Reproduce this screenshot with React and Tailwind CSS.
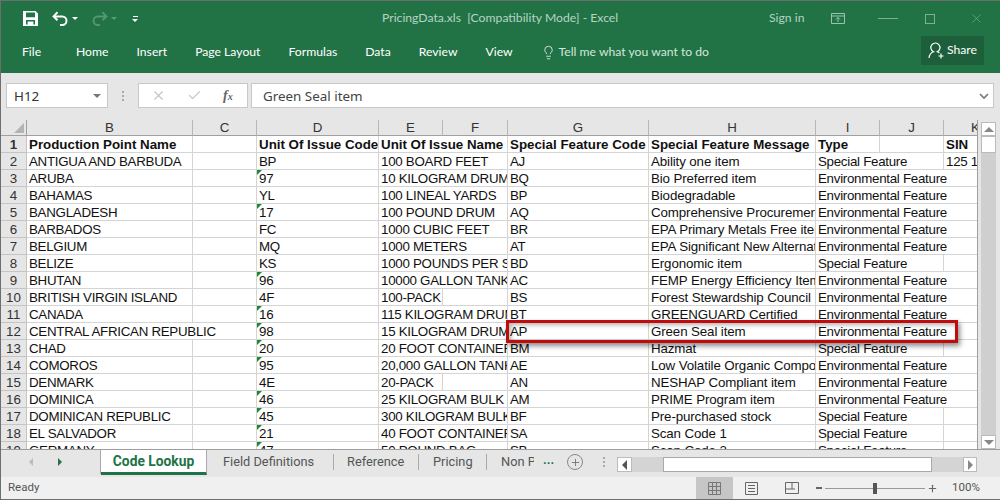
import { Check, Lightbulb, Plus, X } from 'lucide-react'

const columns = ['B', 'C', 'D', 'E', 'F', 'G', 'H', 'I', 'J', 'K']

const rows = [
  ['ANTIGUA AND BARBUDA', 'BP', '100 BOARD FEET', 'AJ', 'Ability one item', 'S', '125 100'],
  ['ARUBA', '97', '10 KILOGRAM DRUM', 'BQ', 'Bio Preferred item', 'E'],
  ['BAHAMAS', 'YL', '100 LINEAL YARDS', 'BP', 'Biodegradable', 'E'],
  ['BANGLADESH', '17', '100 POUND DRUM', 'AQ', 'Comprehensive Procurement Guideline', 'E'],
  ['BARBADOS', 'FC', '1000 CUBIC FEET', 'BR', 'EPA Primary Metals Free item', 'E'],
  ['BELGIUM', 'MQ', '1000 METERS', 'AT', 'EPA Significant New Alternatives', 'E'],
  ['BELIZE', 'KS', '1000 POUNDS PER SQ', 'BD', 'Ergonomic item', 'S'],
  ['BHUTAN', '96', '10000 GALLON TANK', 'AC', 'FEMP Energy Efficiency Item', 'E'],
  ['BRITISH VIRGIN ISLAND', '4F', '100-PACK', 'BS', 'Forest Stewardship Council', 'E'],
  ['CANADA', '16', '115 KILOGRAM DRUM', 'BT', 'GREENGUARD Certified', 'E'],
  ['CENTRAL AFRICAN REPUBLIC', '98', '15 KILOGRAM DRUM', 'AP', 'Green Seal item', 'E'],
  ['CHAD', '20', '20 FOOT CONTAINER', 'BM', 'Hazmat', 'S'],
  ['COMOROS', '95', '20,000 GALLON TANK', 'AE', 'Low Volatile Organic Compounds', 'E'],
  ['DENMARK', '4E', '20-PACK', 'AN', 'NESHAP Compliant item', 'E'],
  ['DOMINICA', '46', '25 KILOGRAM BULK', 'AM', 'PRIME Program item', 'E'],
  ['DOMINICAN REPUBLIC', '45', '300 KILOGRAM BULK', 'BF', 'Pre-purchased stock', 'S'],
  ['EL SALVADOR', '21', '40 FOOT CONTAINER', 'SA', 'Scan Code 1', 'S'],
  ['GERMANY', '47', '50 POUND BAG', 'SB', 'Scan Code 2', 'S'],
]

const gridCols = 'grid grid-cols-[26px_166px_64px_122px_64px_65px_141px_167px_64px_64px_64px]'
const cellBase = 'h-[17px] overflow-hidden whitespace-nowrap border-r border-b border-[#d4d4d4] pl-[2px] leading-[17px]'

function Cell({ children, className = '' }) {
  return <div className={`${cellBase} ${className}`}>{children}</div>
}

function RowNumber({ children }) {
  return (
    <div className="h-[17px] border-r border-b border-[#c4c4c4] bg-[#e6e6e6] text-center leading-[17px] tracking-normal text-[#333]">
      {children}
    </div>
  )
}

function DataRow({ row, number }) {
  const [name, code, unit, sfCode, message, type, sin] = row
  const wideName = name.length > 22
  const shortUnit = unit.length < 9
  return (
    <div className={`${gridCols} tracking-[-0.28px]`}>
      <RowNumber>{number}</RowNumber>
      <Cell className={wideName ? 'col-span-2' : ''}>{name}</Cell>
      {!wideName && <Cell />}
      <Cell className="relative">
        {/^\d+$/.test(code) && (
          <span className="absolute top-0 left-0 border-t-[5px] border-r-[5px] border-t-[#1c8a35] border-r-transparent" />
        )}
        {code}
      </Cell>
      <Cell className={shortUnit ? '' : 'col-span-2'}>{unit}</Cell>
      {shortUnit && <Cell />}
      <Cell>{sfCode}</Cell>
      <Cell className="tracking-[-0.12px]">{message}</Cell>
      {type === 'S' ? (
        <>
          <Cell className="col-span-2">Special Feature</Cell>
          <Cell>{sin}</Cell>
        </>
      ) : (
        <Cell className="col-span-3">Environmental Feature</Cell>
      )}
    </div>
  )
}

function SaveIcon() {
  return (
    <svg width="15" height="15" viewBox="0 0 15 15" className="shrink-0">
      <path fillRule="evenodd" fill="#fff" d="M0 0h12.5L15 2.5V15H0zM3 1.6v4.6h9V1.6zM3 9v4.4h1.6V10.6h5.8v2.8H12V9z" />
      <rect x="5.8" y="11" width="2" height="2.4" fill="#fff" />
    </svg>
  )
}

function ArrowBack({ color, flip }) {
  return (
    <svg width="17" height="15" viewBox="0 0 17 15" className={flip ? '-scale-x-100' : ''}>
      <path d="M5.5 1.2 1.6 5.4l3.9 3.9M2 5.4h8.2a4.3 4.3 0 0 1 0 8.6H8" fill="none" stroke={color} strokeWidth="2" />
    </svg>
  )
}

function Caret({ color, className = '' }) {
  return <span className={`h-0 w-0 border-x-[3px] border-t-[3px] border-x-transparent ${color} ${className}`} />
}

function TitleBar() {
  return (
    <div className="flex h-[35px] items-center font-['Lato',sans-serif] text-[12.2px]">
      <div className="flex w-[381px] items-center pl-[22px]">
        <SaveIcon />
        <div className="ml-[14px]"><ArrowBack color="#fff" /></div>
        <Caret color="border-t-white" className="ml-[3px]" />
        <div className="ml-[13px] opacity-90"><ArrowBack color="#5a9a78" flip /></div>
        <Caret color="border-t-[#5a9a78]" className="ml-[3px]" />
        <div className="ml-[15px] flex flex-col items-center gap-[2px]">
          <span className="h-px w-[5px] bg-white" />
          <Caret color="border-t-white" />
        </div>
      </div>
      <div className="w-[387px] whitespace-pre text-[#b5d3c2]">PricingData.xls  [Compatibility Mode] - Excel</div>
      <div className="w-[62px] text-[#b5d3c2]">Sign in</div>
      <svg width="14" height="12" viewBox="0 0 14 12" className="shrink-0">
        <path d="M.5.5h13v10H.5zM.5 3h13M7 9V4.5M5 6.5l2-2 2 2" fill="none" stroke="#9cc3ad" />
      </svg>
      <span className="ml-[33px] h-px w-[20px] bg-[#7fb096]" />
      <span className="ml-[27px] size-[10px] border border-[#7fb096]" />
      <X size={15} strokeWidth={1} className="ml-[34px] text-[#7fb096]" />
    </div>
  )
}

function TabRow() {
  const tabs = ['Home', 'Insert', 'Page Layout', 'Formulas', 'Data', 'Review', 'View']
  return (
    <div className="flex h-[37px] items-start pl-[21px] font-['Lato',sans-serif] text-[12.2px] text-white">
      <span className="mt-[7px] w-[54px]">File</span>
      <div className="mt-[7px] flex gap-[28px]">
        {tabs.map(t => <span key={t}>{t}</span>)}
        <span className="flex items-center gap-[3px] text-[#d3e6db]">
          <Lightbulb size={15} strokeWidth={1.2} className="text-white" />
          Tell me what you want to do
        </span>
      </div>
      <div className="ml-auto mr-[16px] flex h-[29px] w-[63px] items-center gap-[2px] bg-[#1d5f3a] pl-[7px]">
        <svg width="17" height="17" viewBox="0 0 17 17" className="shrink-0">
          <path d="M1 16c.4-3.6 2.400-5.500 4.500-6.200a4.600 4.600 0 1 1 3.800 0c.8.300 1.500.7 2.100 1.300M13 11.500V16.500M10.500 14H15.500" fill="none" stroke="#fff" strokeWidth="1.2" />
        </svg>
        Share
      </div>
    </div>
  )
}

function FormulaBar() {
  return (
    <div className="flex h-[47px] items-start bg-[#e6e6e6] pt-[10px] pl-[5px] font-['Noto_Sans',sans-serif] text-[13.4px]">
      <div className="flex h-[25px] w-[102px] items-center justify-between border border-[#c8c8c8] bg-white pt-px pr-[6px] pl-[7px] text-[#333]">
        H12
        <Caret color="border-t-[#777]" className="border-x-4! border-t-4!" />
      </div>
      <div className="mx-[14px] flex h-[25px] flex-col justify-center gap-[2px]">
        <span className="size-[2px] bg-[#aaa]" />
        <span className="size-[2px] bg-[#aaa]" />
        <span className="size-[2px] bg-[#aaa]" />
      </div>
      <div className="flex h-[25px] w-[110px] items-center border border-[#c8c8c8] bg-white pl-[12px]">
        <X size={15} strokeWidth={1.8} className="text-[#c4c4c4]" />
        <Check size={15} strokeWidth={1.8} className="ml-[21px] text-[#c4c4c4]" />
        <span className="ml-[21px] font-['Liberation_Serif',serif] text-[14px] font-bold text-[#666] italic">f<span className="text-[10px]">x</span></span>
      </div>
      <div className="ml-[3px] flex h-[25px] w-[743px] items-center justify-between border border-[#c8c8c8] bg-white pt-px pr-[4px] pl-[11px] text-[#444]">
        Green Seal item
        <svg width="10" height="7" viewBox="0 0 10 7"><path d="M1 1l4 4 4-4" fill="none" stroke="#777" strokeWidth="1.600" /></svg>
      </div>
    </div>
  )
}

function Sheet() {
  return (
    <div className="relative h-[329px] w-[976px] overflow-hidden bg-white font-['Liberation_Sans',Arial,sans-serif] text-[13.33px] text-[#111]">
      <div className={`${gridCols} h-[16px]`}>
        <div className="relative h-[16px] border-r border-b border-[#a0a0a0] bg-[#e6e6e6]">
          <span className="absolute right-[2px] bottom-[2px] border-b-[10px] border-l-[10px] border-b-[#b4b4b4] border-l-transparent" />
        </div>
        {columns.map(c => (
          <div key={c} className="h-[16px] border-r border-b border-r-[#b8b8b8] border-b-[#a0a0a0] bg-[#e6e6e6] text-center leading-[15px] text-[#333]">
            {c}
          </div>
        ))}
      </div>
      <div className={`${gridCols} font-bold`}>
        <RowNumber>1</RowNumber>
        <Cell>Production Point Name</Cell>
        <Cell />
        <Cell>Unit Of Issue Code</Cell>
        <Cell className="col-span-2">Unit Of Issue Name</Cell>
        <Cell>Special Feature Code</Cell>
        <Cell>Special Feature Message</Cell>
        <Cell>Type</Cell>
        <Cell />
        <Cell>SIN</Cell>
      </div>
      {rows.map((row, i) => <DataRow key={row[0]} row={row} number={i + 2} />)}
      <div className="absolute top-[200px] left-[505px] h-[23px] w-[452px] border-[3px] border-[#bf0d0d] shadow-[2px_3px_5px_rgba(0,0,0,0.45),inset_2px_2px_4px_rgba(0,0,0,0.3)]" />
    </div>
  )
}

function ScrollButton({ dir, className = '' }) {
  const tri = {
    up: 'border-x-[5px] border-b-[5px] border-x-transparent border-b-[#888]',
    down: 'border-x-[5px] border-t-[5px] border-x-transparent border-t-[#888]',
    left: 'border-y-[5px] border-r-[5px] border-y-transparent border-r-[#555]',
    right: 'border-y-[5px] border-l-[5px] border-y-transparent border-l-[#888]',
  }[dir]
  return (
    <div className={`flex items-center justify-center border border-[#bbb] bg-white ${className}`}>
      <span className={`h-0 w-0 ${tri}`} />
    </div>
  )
}

function VerticalScroll() {
  return (
    <div className="flex h-[329px] w-[22px] flex-col items-center border-l border-[#a0a0a0] bg-[#e6e6e6] pt-[2px]">
      <ScrollButton dir="up" className="h-[14px] w-[15px]" />
      <div className="flex-1 bg-[#cfcfcf]">
        <div className="h-[17px] w-[15px] border border-[#bbb] bg-white" />
      </div>
      <ScrollButton dir="down" className="h-[14px] w-[15px]" />
    </div>
  )
}

function SheetTabs() {
  return (
    <div className="flex h-[28px] items-start border-t border-[#9c9c9c] bg-[#e6e6e6] text-[12.8px] text-[#555]">
      <div className="flex h-[24px] w-[100px] items-center border-r border-[#aaa] pl-[28px]">
        <span className="h-0 w-0 border-y-[4px] border-r-[4px] border-y-transparent border-r-[#bbb]" />
        <span className="ml-[25px] h-0 w-0 border-y-[4px] border-l-[4px] border-y-transparent border-l-[#217346]" />
      </div>
      <div className="flex h-[25px] w-[106px] items-center justify-center border-r border-b-[3px] border-r-[#aaa] border-b-[#217346] bg-white text-[13.8px] font-bold text-[#217346]">
        Code Lookup
      </div>
      <div className="flex h-[24px] w-[410px] shrink-0 items-center pl-[16px]">
        <span className="w-[92px] whitespace-nowrap">Field Definitions</span>
        <span className="mr-[13px] ml-[18px] h-[16px] w-px bg-[#aaa]" />
        <span className="w-[57px] whitespace-nowrap">Reference</span>
        <span className="mx-[14px] h-[16px] w-px bg-[#aaa]" />
        <span className="w-[39px] whitespace-nowrap">Pricing</span>
        <span className="mx-[14px] h-[16px] w-px bg-[#aaa]" />
        <span className="w-[33px] overflow-hidden whitespace-nowrap">Non Pricing</span>
        <span className="mb-[4px] ml-[9px] w-[10px] font-bold text-[#217346]">...</span>
        <span className="ml-[14px] flex size-[16px] shrink-0 items-center justify-center rounded-full border-[1.5px] border-[#888]">
          <Plus size={11} strokeWidth={2} className="text-[#777]" />
        </span>
        <div className="ml-[20px] flex flex-col gap-[2px]">
          <span className="size-[2px] bg-[#aaa]" />
          <span className="size-[2px] bg-[#aaa]" />
          <span className="size-[2px] bg-[#aaa]" />
        </div>
      </div>
      <div className="mt-[7px] flex h-[15px] w-[360px] bg-[#d4d4d4]">
        <ScrollButton dir="left" className="w-[15px]" />
        <div className="ml-[31px] h-[15px] w-[269px] border border-[#aaa] bg-white" />
        <ScrollButton dir="right" className="ml-auto w-[14px]" />
      </div>
    </div>
  )
}

function StatusBar() {
  return (
    <div className="flex h-[22px] items-center bg-[#f0f0f0] pl-[7px] text-[11.5px] text-[#555]">
      <span className="w-[688px]">Ready</span>
      <div className="flex h-full w-[37px] items-center justify-center bg-[#c6c6c6]">
        <svg width="13" height="13" viewBox="0 0 13 13"><path d="M.5.5h12v12H.5zM4.500.5v12M8.500.5v12M.5 4.500h12M.5 8.500h12" fill="none" stroke="#777" /></svg>
      </div>
      <svg width="13" height="13" viewBox="0 0 13 13" className="ml-[12px]"><path d="M.5.5h12v12H.5zM3 3.500h7M3 6.500h7M3 9.500h7" fill="none" stroke="#666" /></svg>
      <svg width="14" height="12" viewBox="0 0 14 12" className="ml-[27px]"><path d="M.5.5h13v11H.5zM.5 7h6.500V.5M7 7h3" fill="none" stroke="#666" /></svg>
      <span className="ml-[17px] h-[2px] w-[6px] bg-[#666]" />
      <div className="ml-[3px] flex h-[12px] w-[100px] items-center">
        <span className="h-px w-[48px] bg-[#999]" />
        <span className="h-[11px] w-[4px] bg-[#555]" />
        <span className="h-px w-[48px] bg-[#999]" />
      </div>
      <Plus size={11} strokeWidth={2.5} className="ml-[2px] text-[#666]" />
      <span className="ml-[14px]">100%</span>
    </div>
  )
}

export default function App() {
  return (
    <div className="h-[500px] w-[1000px] overflow-hidden border-t border-b border-l border-[#6e6e6e] bg-[#e6e6e6] font-['Roboto',sans-serif]">
      <div className="bg-[#217346]">
        <TitleBar />
        <TabRow />
      </div>
      <FormulaBar />
      <div className="flex">
        <Sheet />
        <VerticalScroll />
      </div>
      <SheetTabs />
      <StatusBar />
    </div>
  )
}
